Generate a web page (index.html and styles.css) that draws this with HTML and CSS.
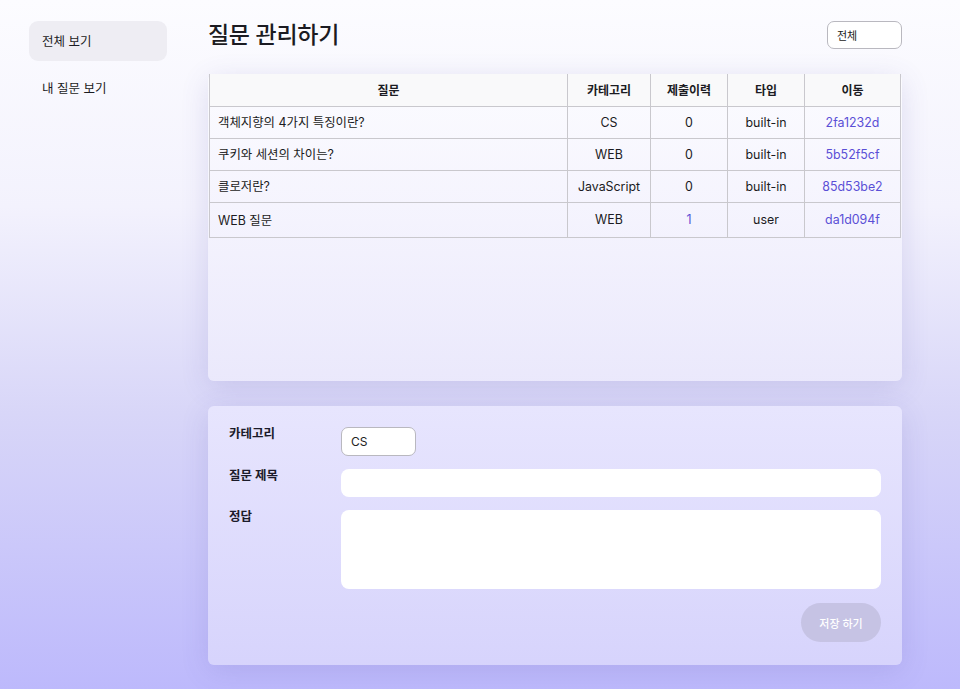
FILE: index.html
```html
<!DOCTYPE html>
<html lang="ko">
<head>
<meta charset="utf-8">
<title>질문 관리하기</title>
<link rel="stylesheet" href="styles.css">
</head>
<body>
<div class="page">
  <nav class="sidebar">
    <a class="nav-item active">전체 보기</a>
    <a class="nav-item">내 질문 보기</a>
  </nav>
  <main class="main">
    <header class="top">
      <h1 class="title">질문 관리하기</h1>
      <div class="select top-select">전체</div>
    </header>
    <section class="card table-card">
      <table class="qtable">
        <thead>
          <tr><th class="c-q">질문</th><th class="c-cat">카테고리</th><th class="c-sub">제출이력</th><th class="c-type">타입</th><th class="c-go">이동</th></tr>
        </thead>
        <tbody>
          <tr><td class="left">객체지향의 4가지 특징이란?</td><td>CS</td><td>0</td><td>built-in</td><td class="link">2fa1232d</td></tr>
          <tr><td class="left">쿠키와 세션의 차이는?</td><td>WEB</td><td>0</td><td>built-in</td><td class="link">5b52f5cf</td></tr>
          <tr><td class="left">클로저란?</td><td>JavaScript</td><td>0</td><td>built-in</td><td class="link">85d53be2</td></tr>
          <tr class="last"><td class="left">WEB 질문</td><td>WEB</td><td class="link">1</td><td>user</td><td class="link">da1d094f</td></tr>
        </tbody>
      </table>
    </section>
    <section class="card form-card">
      <div class="form-row">
        <label class="label">카테고리</label>
        <div class="select cat-select">CS</div>
      </div>
      <div class="form-row">
        <label class="label">질문 제목</label>
        <div class="input"></div>
      </div>
      <div class="form-row">
        <label class="label">정답</label>
        <div class="textarea"></div>
      </div>
      <div class="actions">
        <button class="save">저장 하기</button>
      </div>
    </section>
  </main>
</div>
</body>
</html>
```
FILE: styles.css
```css
* { box-sizing: border-box; }
html, body { margin: 0; height: 100%; }
body {
  font-family: Inter, "Noto Sans CJK KR", sans-serif;
  color: #1b1b22;
  background: linear-gradient(to bottom, #fcfcff 0%, #f3f2fd 30%, #d8d6f8 60%, #bdb9fc 100%);
  min-height: 689px;
}
.page {
  display: flex;
  padding: 21px 58px 24px 29px;
  gap: 41px;
}
.sidebar {
  width: 138px;
  flex: none;
  display: flex;
  flex-direction: column;
  gap: 7px;
}
.nav-item {
  display: flex;
  align-items: center;
  height: 40px;
  padding: 0 13px 1px;
  border-radius: 9px;
  font-size: 12.5px;
  color: #1b1b22;
}
.nav-item.active { background: #eeedf3; }
.main {
  flex: 1;
  display: flex;
  flex-direction: column;
}
.top {
  display: flex;
  justify-content: space-between;
  align-items: flex-start;
  height: 53px;
}
.title {
  margin: 0;
  font-size: 23px;
  font-weight: 500;
  line-height: 29px;
  letter-spacing: -0.3px;
}
.select {
  background: #fff;
  border: 1px solid #b9b8bf;
  border-radius: 7px;
  font-size: 11px;
  display: flex;
  align-items: center;
  padding: 0 9px;
  color: #222;
}
.top-select { width: 75px; height: 28px; }
.card {
  background: rgba(255,255,255,0.55);
  border-radius: 6px;
  box-shadow: 0 6px 28px rgba(90,80,170,0.16);
}
.table-card {
  height: 307px;
  background: linear-gradient(to bottom, rgba(252,252,255,0.9), rgba(236,234,252,0.9));
  padding: 0 1px;
}
.qtable {
  width: 100%;
  border-collapse: collapse;
  font-size: 12.4px;
}
.qtable th, .qtable td {
  border: 1px solid #c9c8cd;
  text-align: center;
  height: 32px;
  padding: 0 9px;
}
.qtable thead th {
  border-top: none;
  background: #f9f9fa;
  font-weight: 700;
  font-size: 12px;
  height: 32px;
}
.qtable tr.last td { height: 35px; }
.qtable td.left { text-align: left; padding-left: 8px; }
.qtable td.link { color: #5a4fd6; }
.c-q { width: 358px; }
.c-cat { width: 83px; }
.c-sub { width: 77px; }
.c-type { width: 77px; }
.form-card {
  margin-top: 25px;
  height: 259px;
  padding: 21px 21px 22px;
  display: flex;
  flex-direction: column;
  gap: 13px;
  background: linear-gradient(to bottom, rgba(232,230,254,0.95), rgba(216,213,252,0.95));
}
.form-row {
  display: flex;
  align-items: flex-start;
}
.label {
  width: 112px;
  flex: none;
  font-size: 12.5px;
  font-weight: 700;
  line-height: 14px;
  color: #1b1b2a;
}
.cat-select {
  width: 75px;
  height: 29px;
  font-size: 12px;
}
.input {
  flex: 1;
  height: 28px;
  background: #fff;
  border-radius: 8px;
}
.textarea {
  flex: 1;
  height: 79px;
  background: #fff;
  border-radius: 8px;
}
.actions {
  display: flex;
  justify-content: flex-end;
  margin-top: 1px;
}
.save {
  width: 80px;
  height: 39px;
  border: none;
  border-radius: 20px;
  background: #c6c3e4;
  color: #ffffff;
  font-family: inherit;
  font-size: 11px;
  font-weight: 500;
}
```
